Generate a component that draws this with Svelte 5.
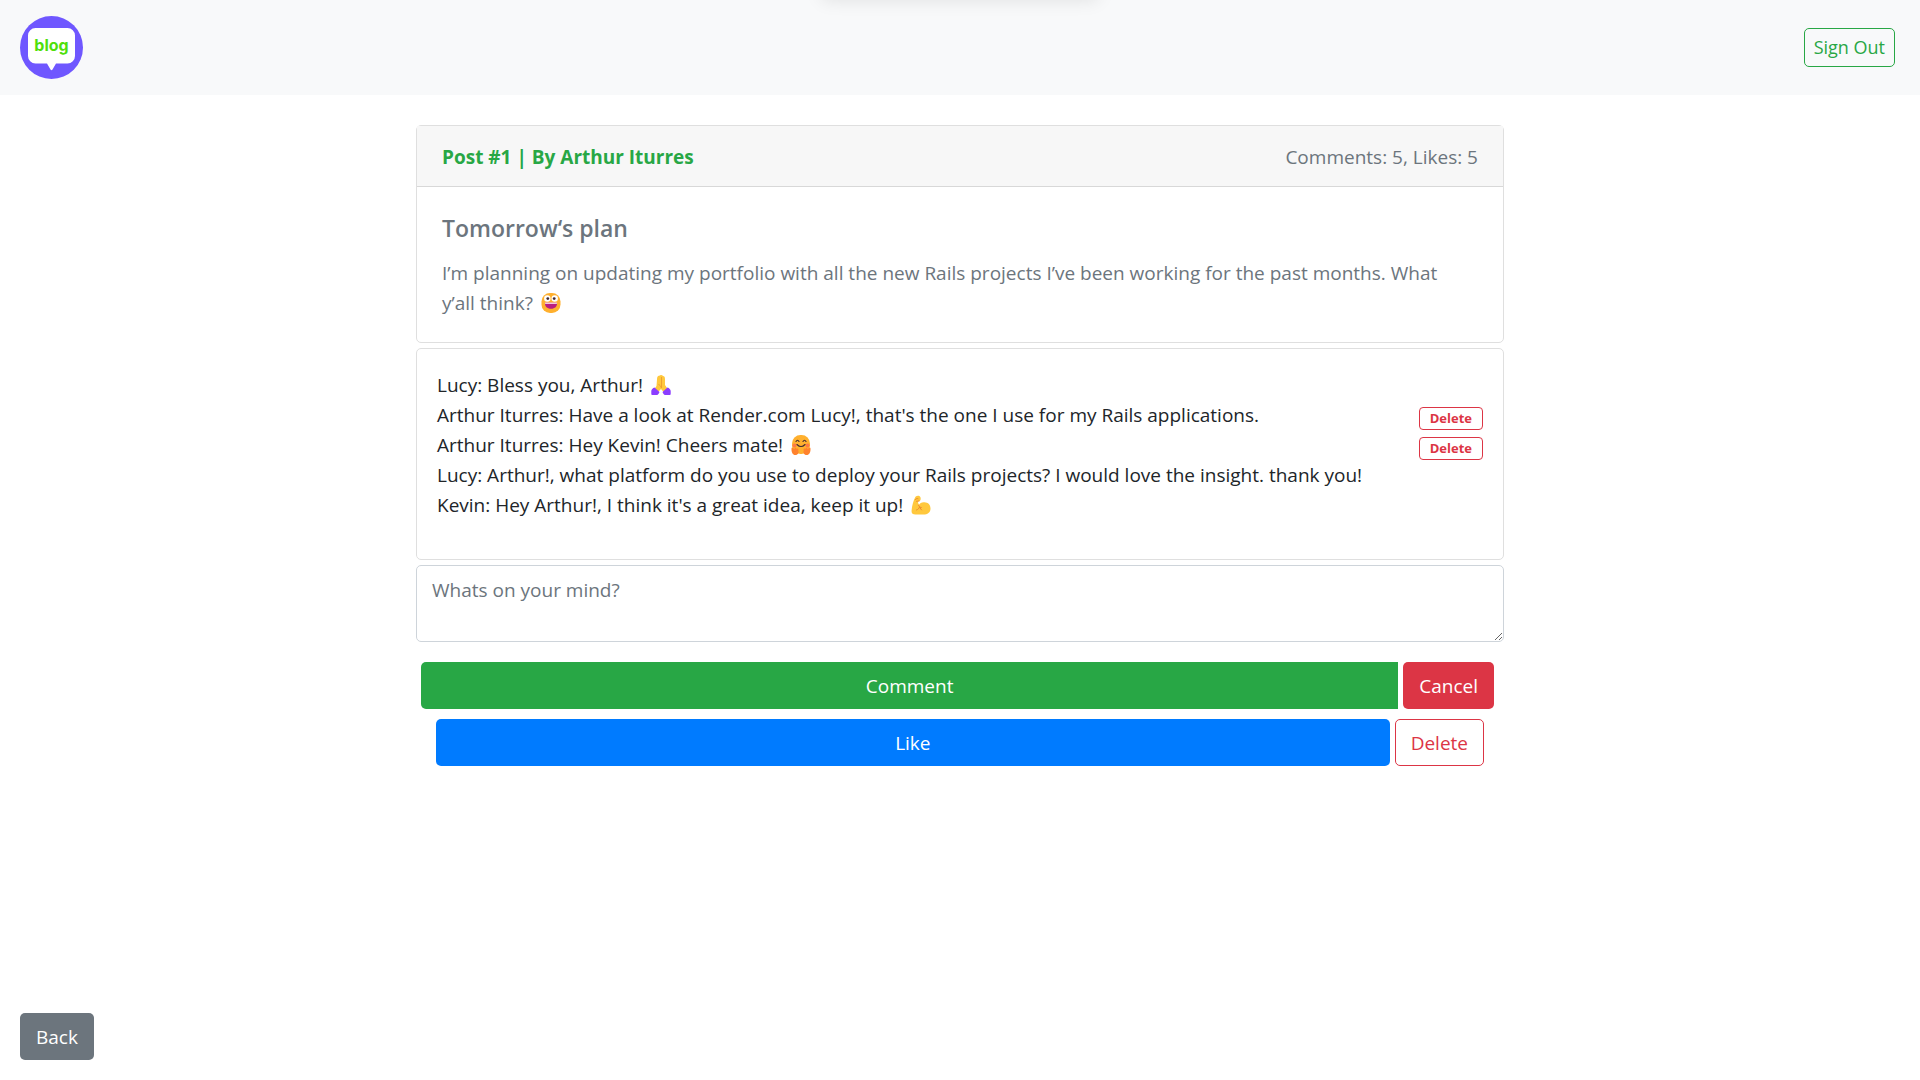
<script>
  const comments = [
    { author: 'Lucy', text: 'Bless you, Arthur!', emoji: 'pray' },
    {
      author: 'Arthur Iturres',
      text: "Have a look at Render.com Lucy!, that's the one I use for my Rails applications.",
      own: true
    },
    { author: 'Arthur Iturres', text: 'Hey Kevin! Cheers mate!', emoji: 'hug', own: true },
    {
      author: 'Lucy',
      text: 'Arthur!, what platform do you use to deploy your Rails projects? I would love the insight. thank you!'
    },
    { author: 'Kevin', text: "Hey Arthur!, I think it's a great idea, keep it up!", emoji: 'arm' }
  ];
  let draft = $state('');
</script>

{#snippet emoji(name)}
  {#if name === 'grin'}
    <svg class="emoji" viewBox="0 0 20 20" role="img" aria-label="Grinning face">
      <rect x="0.5" y="0" width="19" height="20" rx="8.5" fill="#ffb02e" />
      <circle cx="6.3" cy="5.5" r="3.2" fill="#fff" />
      <circle cx="13.7" cy="5.5" r="3.2" fill="#fff" />
      <circle cx="6.8" cy="5.6" r="1.400" fill="#402a32" />
      <circle cx="13.2" cy="5.6" r="1.400" fill="#402a32" />
      <path d="M4 9.8h12c.4 3.8-2.200 6-6 6s-6.400-2.200-6-6z" fill="#bb1d80" />
      <path d="M4 9.600h12v.6c0 .6-.4.9-1 .9H5c-.6 0-1-.3-1-.9z" fill="#f3c6dd" />
    </svg>
  {:else if name === 'pray'}
    <svg class="emoji" viewBox="0 0 20 20" role="img" aria-label="Folded hands">
      <path d="M6 4.500C6 1.500 7 .5 8.300.8 9-.2 11.300-.2 12 1c1.300 0 2 .8 2 3.500V10l3.500 5-4 3-3.500-4-3.500 3.500L3 14.500 5.500 11z" fill="#ffc83d" />
      <path d="M10.500 2v11M7.500 9.500c1.500.5 2 1.500 2.500 3" fill="none" stroke="#e9952f" stroke-width=".8" />
      <path d="M3.500 12.500l5 4.500c-.5 1.500-1.500 3-2.500 3H1.500C.7 20 .3 19.500.3 18.500v-2.500c0-1.500 1.500-3 3.200-3.500zM16.500 12.500l-5 4.500c.5 1.500 1.500 3 2.500 3h4.500c.8 0 1.200-.5 1.200-1.500v-2.500c0-1.500-1.500-3-3.200-3.500z" fill="#8b3dff" />
    </svg>
  {:else if name === 'hug'}
    <svg class="emoji" viewBox="0 0 20 20" role="img" aria-label="Hugging face">
      <rect x="1" y="0" width="18" height="19" rx="8.500" fill="#ffb02e" />
      <circle cx="3.500" cy="10.500" r="2" fill="#ff7a45" />
      <circle cx="16.500" cy="10.500" r="2" fill="#ff7a45" />
      <path d="M5 6.500q1.500-2.500 3 0M12 6.500q1.500-2.500 3 0M6 9.500q4 4 8 0" fill="none" stroke="#402a32" stroke-width="1.100" stroke-linecap="round" />
      <path d="M.5 13.500c0-1.500 1.500-1.500 2 0l.8.500c1-2 2.200-1.500 2 0 1.500-1 2.500 0 2 1.500.8 3-.8 4.500-3 4.500C1.800 20 .3 17.500.5 13.500zM19.500 13.500c0-1.500-1.500-1.500-2 0l-.8.500c-1-2-2.200-1.500-2 0-1.500-1-2.500 0-2 1.500-.8 3 .8 4.500 3 4.500 2.500 0 4-2.500 3.800-6.500z" fill="#ff822d" />
    </svg>
  {:else if name === 'arm'}
    <svg class="emoji" viewBox="0 0 20 20" role="img" aria-label="Flexed biceps">
      <path d="M4.500 1.800C6 .2 8.500.3 9.300 2c.8 1.700.3 3.500-.8 4.200L6.800 6.500l1 3.500c1-1.500 2.500-2.500 5-2.700 4.200-.3 6.700 2.700 6.700 6.200 0 4-3 6-7 6H4.500C1.500 19.500.3 18 .6 15.500 1 11.500 2 6 4.500 1.800z" fill="#ffc83d" />
      <path d="M4.500 4.500c.5-1 1.500-1.200 2.500-.8M5.500 6.300l2.500-.3M7.500 10c.3 1.500 1.300 2.500 2.800 2.500M8.500 12c-.3 1.500-1.500 2.500-3 3M9 12.500c.5 1 .8 2 1.500 2.500" fill="none" stroke="#e9842f" stroke-width=".9" stroke-linecap="round" />
    </svg>
  {/if}
{/snippet}

<div class="page">
  <header class="navbar">
    <a href="#home" class="brand" aria-label="Blog home">
      <svg viewBox="0 0 63 63">
        <circle cx="31.500" cy="31.500" r="31.500" fill="#6f57ff" />
        <path d="M15.500 12h32a7.500 7.500 0 0 1 7.500 7.500v20.500a7.500 7.500 0 0 1-7.500 7.500H36l-3.500 6q-1 1.400-2 0l-3.500-6H15.500A7.500 7.500 0 0 1 8 40V19.500A7.500 7.500 0 0 1 15.500 12z" fill="#fff" />
        <text x="31.500" y="35" text-anchor="middle" class="wordmark">blog</text>
      </svg>
    </a>
    <button class="btn small outline-green">Sign Out</button>
  </header>

  <main>
    <article class="card">
      <div class="card-head">
        <strong>Post #1 | By Arthur Iturres</strong>
        <span>Comments: 5, Likes: 5</span>
      </div>
      <div class="card-body">
        <h1>Tomorrow‘s plan</h1>
        <p>
          I’m planning on updating my portfolio with all the new Rails projects I’ve been working for the past months. What y’all think? {@render emoji('grin')}
        </p>
      </div>
    </article>

    <ul class="card comments">
      {#each comments as comment}
        <li>
          <span>{comment.author}: {comment.text} {@render emoji(comment.emoji)}</span>
          {#if comment.own}<button class="mini">Delete</button>{/if}
        </li>
      {/each}
    </ul>

    <textarea aria-label="Comment" placeholder="Whats on your mind?" bind:value={draft}></textarea>

    <div class="row comment-row">
      <button class="btn green grow">Comment</button>
      <button class="btn red">Cancel</button>
    </div>
    <div class="row like-row">
      <button class="btn blue grow">Like</button>
      <button class="btn outline-red">Delete</button>
    </div>
  </main>

  <footer>
    <button class="btn gray">Back</button>
  </footer>
</div>

<style>
  :global(body) {
    background: #fff;
  }
  .page,
  .page * {
    box-sizing: border-box;
  }
  .page {
    position: relative;
    display: flex;
    flex-direction: column;
    min-height: 100vh;
    overflow: hidden;
    color: #212529;
    font-family: 'Open Sans', 'Noto Sans', sans-serif;
    font-size: 19px;
    line-height: 30px;
  }
  .page::before {
    content: '';
    position: absolute;
    top: -20px;
    left: 50%;
    width: 276px;
    height: 20px;
    margin-left: -138px;
    box-shadow: 0 0 18px rgba(0, 0, 0, 0.1);
  }
  .navbar {
    display: flex;
    align-items: center;
    justify-content: space-between;
    padding: 16px 25px 16px 20px;
    background: #f8f9fa;
  }
  .brand,
  .brand svg {
    display: block;
    width: 63px;
    height: 63px;
  }
  .wordmark {
    fill: #4fdf0c;
    font-family: Inter, sans-serif;
    font-size: 16px;
    font-weight: 700;
  }
  main {
    flex: 1;
    display: flex;
    flex-direction: column;
    width: 100%;
    max-width: 1088px;
    margin: 0 auto;
    padding-top: 30px;
  }
  .card {
    margin: 0 0 5px;
    border: 1px solid #dfdfdf;
    border-radius: 5px;
    background: #fff;
  }
  .card-head {
    display: flex;
    justify-content: space-between;
    padding: 16px 25px 14px;
    border-bottom: 1px solid #d8d8d8;
    background: #f7f7f7;
    color: #6c757d;
  }
  .card-head strong {
    color: #28a745;
  }
  .card-body {
    padding: 26px 50px 24px 25px;
    color: #6c757d;
  }
  h1 {
    margin: 0 0 15px;
    font-size: 23px;
    font-weight: 600;
    line-height: 30px;
  }
  p {
    margin: 0;
  }
  .emoji {
    width: 20px;
    height: 20px;
    margin-left: 3px;
    vertical-align: -3px;
  }
  .comments {
    padding: 21px 20px 39px;
    list-style: none;
  }
  li {
    display: flex;
    align-items: flex-end;
    justify-content: space-between;
    min-height: 30px;
  }
  button {
    font-family: inherit;
    cursor: pointer;
  }
  .mini {
    height: 23px;
    padding: 0 10px;
    border: 1px solid #dc3545;
    border-radius: 4px;
    background: #fff;
    color: #dc3545;
    font-size: 13px;
    font-weight: 700;
    line-height: 21px;
  }
  textarea {
    display: block;
    width: 100%;
    height: 77px;
    padding: 9px 15px;
    border: 1px solid #ced4da;
    border-radius: 5px;
    background: #fff;
    color: #495057;
    font: inherit;
    resize: vertical;
  }
  textarea::placeholder {
    color: #6c757d;
    opacity: 1;
  }
  .row {
    display: flex;
    gap: 5px;
  }
  .comment-row {
    padding: 20px 10px 10px 5px;
  }
  .like-row {
    padding: 0 20px;
  }
  .btn {
    padding: 9px 15px 7px;
    border: 1px solid transparent;
    border-radius: 5px;
    font-size: 19px;
    line-height: 29px;
  }
  .grow {
    flex: 1;
  }
  .small {
    padding: 5px 9px;
    font-size: 18px;
    line-height: 27px;
  }
  .green {
    border-radius: 5px 0 0 5px;
    background: #28a745;
    color: #fff;
  }
  .red {
    background: #dc3545;
    color: #fff;
  }
  .blue {
    background: #007bff;
    color: #fff;
  }
  .gray {
    background: #6c757d;
    color: #fff;
  }
  .outline-green {
    border-color: #28a745;
    background: transparent;
    color: #28a745;
  }
  .outline-red {
    border-color: #dc3545;
    background: transparent;
    color: #dc3545;
  }
  footer {
    padding: 20px;
  }
</style>
